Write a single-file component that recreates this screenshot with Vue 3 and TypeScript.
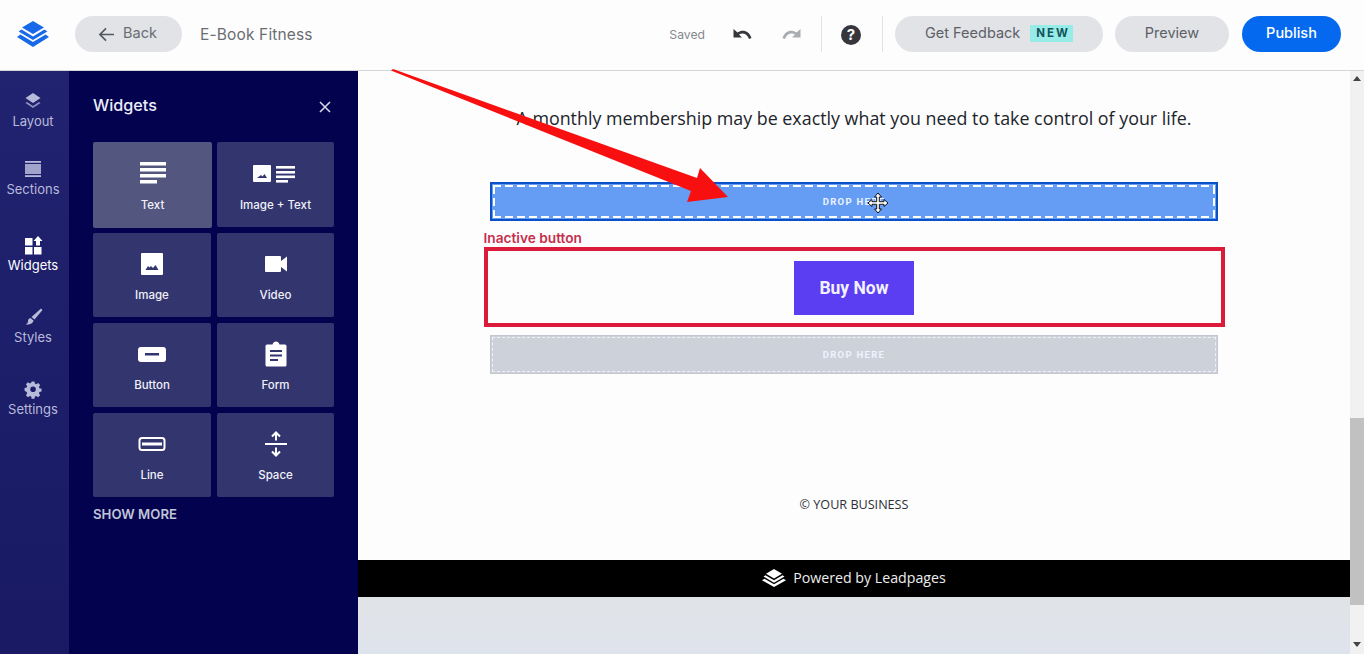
<script setup lang="ts">
interface Tool { label: string; icon: string; on?: boolean }
const rail: Tool[] = [
  { label: 'Layout', icon: 'layout' },
  { label: 'Sections', icon: 'sections' },
  { label: 'Widgets', icon: 'widgets', on: true },
  { label: 'Styles', icon: 'styles' },
  { label: 'Settings', icon: 'settings' },
]
const tiles: Tool[] = [
  { label: 'Text', icon: 'text', on: true },
  { label: 'Image + Text', icon: 'imagetext' },
  { label: 'Image', icon: 'image' },
  { label: 'Video', icon: 'video' },
  { label: 'Button', icon: 'button' },
  { label: 'Form', icon: 'form' },
  { label: 'Line', icon: 'line' },
  { label: 'Space', icon: 'space' },
]
</script>

<template>
  <div class="app">
    <header class="top">
      <svg class="logo" viewBox="0 0 32 26" width="32" height="26">
        <path fill="#1769e8" d="M16 0l11 6.500L16 13 5 6.500z" />
        <path fill="#1769e8" d="M4.600 8.600L16 15.400l11.400-6.800 3 1.900L16 19 1.600 10.500z" />
        <path fill="#1769e8" d="M3.400 13.600L16 21l12.600-7.400L32 16l-16 10L0 16z" />
      </svg>
      <button class="pill back">
        <svg viewBox="0 0 18 16" width="17" height="15"><path d="M17 8H2M8.500 1.500L2 8l6.500 6.500" fill="none" stroke="#55585e" stroke-width="1.800" /></svg>
        <span>Back</span>
      </button>
      <span class="title">E-Book Fitness</span>
      <span class="saved">Saved</span>
      <svg class="undo" viewBox="0 0 22 12" width="22" height="12"><path d="M1.500 1v8.500H10l-3-3c3.500-2 8-1 10 4.500l2.500-1C17 3 11 1 5.500 4.500L1.500 1z" fill="#33363b" /></svg>
      <svg class="redo" viewBox="0 0 22 12" width="22" height="12"><path d="M20.500 1v8.500H12l3-3c-3.500-2-8-1-10 4.500l-2.500-1C5 3 11 1 16.500 4.500L20.500 1z" fill="#a9acb1" /></svg>
      <i class="rule rule-a"></i>
      <span class="help">?</span>
      <i class="rule rule-b"></i>
      <button class="pill feedback">Get Feedback <b class="new">NEW</b></button>
      <button class="pill preview">Preview</button>
      <button class="pill publish">Publish</button>
    </header>

    <div class="body">
      <nav class="rail">
        <div v-for="t in rail" :key="t.label" class="rail-item" :class="{ on: t.on }">
          <svg viewBox="0 0 22 22" width="22" height="22">
            <g v-if="t.icon === 'layout'" fill="currentColor">
              <path d="M11 3l7.500 5-7.500 5-7.500-5z" />
              <path d="M5 12l6 4 6-4 1.500 1-7.500 5-7.500-5z" opacity=".75" />
            </g>
            <g v-else-if="t.icon === 'sections'" fill="currentColor">
              <rect x="3" y="3" width="16" height="1.800" />
              <rect x="3" y="6" width="16" height="10" opacity=".85" />
              <rect x="3" y="17.200" width="16" height="1.800" />
            </g>
            <g v-else-if="t.icon === 'widgets'" fill="currentColor">
              <rect x="3" y="4" width="7.500" height="7.500" />
              <path d="M16 2l4.500 5-2.500 0v4.500h-4V7h-2.500z" />
              <rect x="3" y="13" width="7.500" height="7.500" />
              <rect x="12" y="13" width="7.500" height="7.500" />
            </g>
            <g v-else-if="t.icon === 'styles'" fill="currentColor">
              <path d="M19 2.500l1.500 1.500-8 9.500-3-2.500z" />
              <path d="M8.500 12l3 2.500c-.5 3-4 4.500-8 4 2-1 2.500-2 2.500-3.500 0-1.500 1-2.700 2.500-3z" />
            </g>
            <g v-else fill="currentColor" transform="translate(1.700 1.700) scale(.85)">
              <path fill-rule="evenodd" d="M9.300 2h3.400l.5 2.600 1.500.7 2.300-1.400 2.300 2.400-1.400 2.200.6 1.500 2.500.6v3.300l-2.500.6-.6 1.500 1.400 2.200-2.300 2.400-2.300-1.400-1.500.7-.5 2.600H9.300l-.5-2.600-1.500-.7-2.300 1.400-2.300-2.400 1.400-2.200-.6-1.500L1 13v-3.300l2.500-.6.6-1.500-1.400-2.200L5 3l2.300 1.400 1.500-.7zM11 8a3.300 3.300 0 1 0 0 6.600A3.300 3.300 0 0 0 11 8z" />
            </g>
          </svg>
          <span>{{ t.label }}</span>
        </div>
      </nav>

      <aside class="panel">
        <div class="panel-head">
          <h2>Widgets</h2>
          <svg viewBox="0 0 12 12" width="12" height="12"><path d="M1 1l10 10M11 1L1 11" stroke="#d5d6e6" stroke-width="1.600" /></svg>
        </div>
        <div class="grid">
          <div v-for="t in tiles" :key="t.label" class="tile" :class="{ on: t.on }">
            <svg class="glyph" viewBox="0 0 48 28" width="48" height="28">
              <g v-if="t.icon === 'text'" fill="#fff">
                <rect x="11" y="2" width="26" height="3.500" />
                <rect x="11" y="8" width="26" height="3.500" />
                <rect x="11" y="14" width="26" height="3.500" />
                <rect x="11" y="20" width="17" height="3.500" />
              </g>
              <g v-else-if="t.icon === 'imagetext'" fill="#fff">
                <path fill-rule="evenodd" d="M1 6a1 1 0 0 1 1-1h16a1 1 0 0 1 1 1v15a1 1 0 0 1-1 1H2a1 1 0 0 1-1-1zM5 18h10l-2.500-4-2 2.500-1.500-1.500z" />
                <rect x="24" y="6" width="19" height="2.600" />
                <rect x="24" y="11" width="19" height="2.600" />
                <rect x="24" y="15.500" width="19" height="2.600" />
                <rect x="24" y="20" width="12" height="2.600" />
              </g>
              <g v-else-if="t.icon === 'image'" fill="#fff">
                <path fill-rule="evenodd" d="M13 4a1 1 0 0 1 1-1h20a1 1 0 0 1 1 1v20a1 1 0 0 1-1 1H14a1 1 0 0 1-1-1zM17.500 20h13l-3-5-2.500 3-2-2-1.500 1.500-1.500-1.500z" />
              </g>
              <g v-else-if="t.icon === 'video'" fill="#fff">
                <path d="M13 7a1 1 0 0 1 1-1h14a1 1 0 0 1 1 1v4l6-4.500v15L29 17v4a1 1 0 0 1-1 1H14a1 1 0 0 1-1-1z" />
              </g>
              <g v-else-if="t.icon === 'button'">
                <rect x="10" y="7" width="28" height="15" rx="3" fill="#fff" />
                <rect x="17" y="13" width="14" height="2.500" fill="#33356e" />
              </g>
              <g v-else-if="t.icon === 'form'">
                <path d="M15 4.500h5.500C21 2.500 22.500 1.500 24 1.500s3 1 3.500 3H33a1.500 1.500 0 0 1 1.500 1.500v19a1.500 1.500 0 0 1-1.500 1.500H15a1.500 1.500 0 0 1-1.500-1.500V6A1.500 1.500 0 0 1 15 4.500z" fill="#fff" />
                <rect x="18" y="10" width="12" height="2" fill="#33356e" />
                <rect x="18" y="14.500" width="12" height="2" fill="#33356e" />
                <rect x="18" y="19" width="8" height="2" fill="#33356e" />
              </g>
              <g v-else-if="t.icon === 'line'">
                <rect x="11.500" y="8" width="25" height="12" rx="2.500" fill="none" stroke="#fff" stroke-width="2" />
                <rect x="14" y="12.500" width="20" height="3" fill="#fff" />
              </g>
              <g v-else fill="none" stroke="#fff" stroke-width="2">
                <path d="M13 14h22" />
                <path d="M24 2.500v8M20 6.500l4-4 4 4" />
                <path d="M24 25.500v-8M20 21.500l4 4 4-4" />
              </g>
            </svg>
            <span>{{ t.label }}</span>
          </div>
        </div>
        <div class="more">SHOW MORE</div>
      </aside>

      <main class="canvas">
        <p class="lead">A monthly membership may be exactly what you need to take control of your life.</p>
        <div class="drop active"><div class="dash"><span>DROP HERE</span></div></div>
        <div class="label">Inactive button</div>
        <div class="marked"><button class="buy">Buy Now</button></div>
        <div class="drop idle"><div class="dash-idle"><span>DROP HERE</span></div></div>
        <div class="copy">© YOUR BUSINESS</div>
        <div class="powered">
          <svg viewBox="0 0 24 18" width="24" height="18">
            <path fill="#fff" d="M12 0l8 4.700L12 9.400 4 4.700z" />
            <path fill="#fff" d="M3.500 6.300L12 11.300l8.500-5 2 1.300L12 13.800 1.500 7.600z" />
            <path fill="#fff" d="M2.500 9.800L12 15.300l9.500-5.500L24 11.300 12 18 0 11.300z" />
          </svg>
          <span>Powered by Leadpages</span>
        </div>
        <div class="rest"></div>
      </main>

      <div class="scroll">
        <span class="up"></span>
        <span class="thumb"></span>
        <span class="down"></span>
      </div>
    </div>

    <svg class="arrow" viewBox="0 0 1364 654" width="1364" height="654">
      <path fill="#f80f10" d="M391 70.500L393 69 697 178 700 168 728 197 687 202 691 191z" />
    </svg>
    <svg class="cursor" viewBox="0 0 22 22" width="22" height="22">
      <path fill="#fff" stroke="#111" stroke-width="1" stroke-linejoin="round" d="M11 1l3.500 4H12.300v4.700H17V7.500l4 3.500-4 3.500v-2.200h-4.700V17h2.200L11 21l-3.500-4h2.200v-4.700H5v2.200L1 11l4-3.500v2.200h4.700V5H7.500z" />
    </svg>
  </div>
</template>

<style>
html, body { margin: 0; padding: 0; background: #fdfdfd; overflow: hidden; }
</style>

<style scoped>
.app { position: relative; width: 1364px; height: 654px; overflow: hidden; display: flex; flex-direction: column; font-family: Inter, "Liberation Sans", sans-serif; }
.top { height: 68px; flex: none; display: flex; align-items: center; background: #fdfdfd; border-bottom: 1px solid #d4d5d6; padding: 0 23px 2px 17px; box-sizing: content-box; }
.logo { margin-right: 26px; }
.pill { height: 36px; border: 0; border-radius: 18px; background: #e1e3e7; color: #5d6066; font: 400 14.500px/34px Inter, "Liberation Sans", sans-serif; display: flex; align-items: center; justify-content: center; padding: 0 0 2px; box-sizing: border-box; white-space: nowrap; }
.back { width: 107px; gap: 8px; color: #6a6d72; }
.back svg { margin: 2px 0 0 -2px; }
.title { margin-left: 18px; font-size: 15.500px; color: #6a6d72; letter-spacing: .15px; }
.saved { margin-left: auto; font-size: 12.200px; color: #85888c; }
.undo { margin-left: 27px; }
.redo { margin-left: 26px; }
.rule { width: 1px; height: 36px; background: #e1e2e3; }
.rule-a { margin-left: 19px; }
.help { margin: 1px 0 0 19px; width: 20px; height: 20px; border-radius: 50%; background: #35373d; color: #fff; font: 700 15px/20px Inter, sans-serif; text-align: center; }
.rule-b { margin-left: 21px; }
.feedback { margin-left: 12px; width: 208px; gap: 10px; }
.new { background: #98ece8; color: #12535c; font-size: 11.500px; font-weight: 700; letter-spacing: 2px; padding: 0 3px 0 6px; height: 17px; line-height: 17px; }
.preview { margin-left: 12px; width: 114px; }
.publish { margin-left: 13px; width: 99px; background: #0469ee; color: #fff; font-weight: 500; }

.body { flex: 1; display: flex; min-height: 0; }
.rail { width: 69px; flex: none; background: linear-gradient(#212370, #191a63); padding: 19px 3px 0 0; display: flex; flex-direction: column; gap: 31px; box-sizing: border-box; color: #b8bada; }
.rail-item { height: 41px; display: flex; flex-direction: column; align-items: center; font-size: 13px; line-height: 19px; }
.rail-item:nth-child(2) { margin-top: -4px; }
.rail-item:nth-child(3) { margin-top: 4px; }
.rail-item.on { color: #fff; }
.panel { width: 289px; flex: none; background: #02024f; padding: 0 24px; box-sizing: border-box; }
.panel-head { height: 71px; display: flex; align-items: center; justify-content: space-between; padding: 0 3px 2px 0; box-sizing: border-box; }
.panel-head h2 { margin: 0 0 2px; font-size: 16.200px; font-weight: 500; color: #eceefa; }
.panel-head svg { margin: 2px 0 0; }
.grid { display: grid; grid-template-columns: 118px 117px; grid-template-rows: 85px 84px 84px 84px; gap: 6px; }
.tile { background: #33356e; border-radius: 2px; display: flex; flex-direction: column; align-items: center; padding-top: 17px; box-sizing: border-box; color: #f0f1f8; font-size: 11.500px; font-weight: 500; }
.tile:nth-child(-n+2) { padding-top: 18px; }
.tile.on { background: #53567f; margin: 0 -1px -1px 0; }
.tile span { margin-top: 9px; line-height: 16px; }
.more { margin-top: 8px; font-size: 13.200px; font-weight: 600; color: #c2c4d8; line-height: 18px; }

.canvas { position: relative; flex: 1; min-width: 0; background: #fdfdfd; display: flex; flex-direction: column; align-items: center; }
.lead { margin: 32px 0 0; font: 400 17.850px/30px "Open Sans", sans-serif; color: #20242a; white-space: nowrap; }
.drop { width: 728px; height: 39px; flex: none; box-sizing: border-box; }
.drop.active { margin-top: 49px; background: #659df5; border: 2px solid #0a50c8; padding: 1px; }
.dash { height: 100%; display: flex; align-items: center; justify-content: center; background:
  repeating-linear-gradient(90deg, #fff 0 8px, transparent 8px 12px) top / 100% 2px no-repeat,
  repeating-linear-gradient(90deg, #fff 0 8px, transparent 8px 12px) bottom / 100% 2px no-repeat,
  repeating-linear-gradient(0deg, #fff 0 8px, transparent 8px 12px) left / 2px 100% no-repeat,
  repeating-linear-gradient(0deg, #fff 0 8px, transparent 8px 12px) right / 2px 100% no-repeat; }
.drop span { font: 700 9.500px Roboto, sans-serif; letter-spacing: 1.300px; color: #eef3ff; padding-bottom: 1px; }
.label { width: 741px; margin-top: 9px; padding-bottom: 1px; font-size: 13.700px; font-weight: 600; line-height: 16px; color: #c5304e; }
.marked { width: 741px; height: 80px; box-sizing: border-box; border: 4px solid #dc1a3a; display: flex; align-items: center; justify-content: center; flex: none; }
.buy { width: 120px; height: 54px; margin-top: 1px; border: 0; background: #5b3df2; color: #f3f1ff; font: 700 17.500px Roboto, sans-serif; padding: 0; }
.drop.idle { margin-top: 8px; background: #cdd1da; border: 1px solid #c3c7cf; padding: 1px; }
.dash-idle { height: 100%; box-sizing: border-box; border: 1px dashed #eef0f4; display: flex; align-items: center; justify-content: center; }
.copy { margin-top: 121px; font: 400 12.600px/20px "Open Sans", sans-serif; color: #2c3036; }
.powered { width: 100%; height: 37px; margin-top: 45px; padding-bottom: 2px; box-sizing: border-box; flex: none; background: #000; color: #eee; display: flex; align-items: center; justify-content: center; gap: 7px; font: 400 14.200px "Open Sans", sans-serif; }
.rest { width: 100%; flex: 1; background: linear-gradient(#e0e3e6, #dfe3ec); }

.scroll { width: 14px; flex: none; background: #f1f1f1; display: flex; flex-direction: column; align-items: center; }
.up, .down { width: 0; height: 0; border-left: 4px solid transparent; border-right: 4px solid transparent; }
.up { margin-top: 5px; border-bottom: 5px solid #444; }
.thumb { width: 14px; height: 187px; margin-top: 337px; background: #c1c1c1; }
.down { margin-top: 37px; border-top: 5px solid #444; }

.arrow { position: absolute; left: 0; top: 0; pointer-events: none; }
.cursor { position: absolute; left: 867px; top: 192px; pointer-events: none; }
</style>
